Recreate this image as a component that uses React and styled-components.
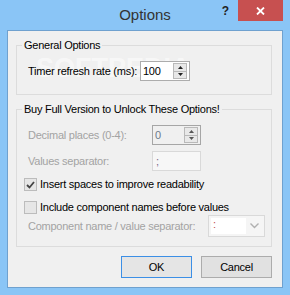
import React from 'react';
import styled, { createGlobalStyle } from 'styled-components';

const Global = createGlobalStyle`
  html, body { margin: 0; padding: 0; background: #8ac5f6; }
  body { font-family: "Liberation Sans", Arial, sans-serif; }
`;

const Window = styled.div`
  width: 290px;
  height: 295px;
  box-sizing: border-box;
  background: #8ac5f6;
  padding: 0 7px 7px 7px;
  display: flex;
  flex-direction: column;
  font-family: "Liberation Sans", Arial, sans-serif;
  font-size: 11px;
  letter-spacing: -0.25px;
  color: #000;
`;

const TitleBar = styled.div`
  height: 30px;
  flex: none;
  display: grid;
  grid-template-columns: 1fr auto 1fr;
  align-items: start;
`;

const Title = styled.div`
  grid-column: 2;
  font-size: 15px;
  line-height: 17px;
  padding-top: 6px;
  letter-spacing: 0;
  color: #333;
`;

const Controls = styled.div`
  grid-column: 3;
  display: flex;
  justify-content: flex-end;
  align-items: flex-start;
`;

const Help = styled.div`
  font-size: 12px;
  font-weight: bold;
  line-height: 14px;
  padding-top: 4px;
  margin-right: 9px;
  letter-spacing: 0;
  color: #222;
`;

const CloseButton = styled.div`
  width: 45px;
  height: 21px;
  background: #c75050;
  display: flex;
  align-items: center;
  justify-content: center;
`;

const Client = styled.div`
  flex: 1;
  position: relative;
  background: #f0f0f0;
  border: 1px solid #6fa1cf;
  padding: 7px 10px 9px 8px;
  display: flex;
  flex-direction: column;
`;

const Watermark = styled.div`
  position: absolute;
  left: 28px;
  top: 22px;
  font-size: 27px;
  font-weight: bold;
  letter-spacing: 0;
  color: rgba(255, 255, 255, 0.55);
  pointer-events: none;
`;

const Group = styled.fieldset`
  margin: 0 0 ${(p) => p.$mb}px 0;
  padding: 0;
  border: 1px solid #dcdcdc;
  min-width: 0;
  position: relative;
`;

const Legend = styled.legend`
  margin-left: 5px;
  padding: 0 2px;
  line-height: 14px;
  color: #000;
`;

const GroupBody = styled.div`
  display: flex;
  flex-direction: column;
  padding: 9px 0 ${(p) => p.$pb}px 7px;
`;

const Row = styled.div`
  display: flex;
  align-items: center;
  margin-top: ${(p) => p.$mt || 0}px;
  padding-left: ${(p) => (p.$check ? 0 : 4)}px;
`;

const Label = styled.span`
  width: ${(p) => p.$w}px;
  flex: none;
  white-space: nowrap;
  color: ${(p) => (p.$disabled ? '#a3a3a3' : '#000')};
`;

const SpinBox = styled.div`
  width: ${(p) => p.$w}px;
  height: 20px;
  box-sizing: border-box;
  border: 1px solid ${(p) => (p.$disabled ? '#a6a6a6' : '#acacac')};
  background: ${(p) => (p.$disabled ? '#f0f0f0' : '#fff')};
  display: flex;
  align-items: center;
`;

const FieldText = styled.span`
  flex: 1;
  padding-left: 2px;
  color: ${(p) => p.$color};
`;

const SpinButtons = styled.div`
  width: 14px;
  height: 16px;
  margin-right: 2px;
  display: flex;
  flex-direction: column;
  gap: 0;
`;

const SpinButton = styled.div`
  flex: 1;
  box-sizing: border-box;
  border: 1px solid #b9b9b9;
  background: #e8e8e8;
  display: flex;
  align-items: center;
  justify-content: center;
  & + & { border-top: none; }
`;

const TextBox = styled.div`
  width: 49px;
  height: 20px;
  box-sizing: border-box;
  border: 1px solid #d9d9d9;
  background: #f7f7f7;
  display: flex;
  align-items: center;
  padding-left: 3px;
  color: #7a6a8a;
`;

const CheckBox = styled.div`
  width: 13px;
  height: 13px;
  box-sizing: border-box;
  border: 1px solid #bcbcbc;
  background: #e6e6e6;
  flex: none;
  display: flex;
  align-items: center;
  justify-content: center;
`;

const CheckLabel = styled.span`
  margin-left: 3px;
  margin-top: -2px;
  white-space: nowrap;
`;

const Combo = styled.div`
  width: 57px;
  height: 22px;
  box-sizing: border-box;
  border: 1px solid #d9d9d9;
  background: #f5f5f5;
  display: flex;
  align-items: center;
  padding: 2px;
`;

const ComboField = styled.div`
  width: 33px;
  height: 16px;
  background: #fff;
  color: #c05050;
  padding-left: 2px;
  line-height: 13px;
`;

const ComboArrow = styled.div`
  flex: 1;
  display: flex;
  justify-content: center;
  align-items: center;
`;

const ButtonRow = styled.div`
  display: flex;
  justify-content: flex-end;
  gap: 9px;
`;

const Button = styled.div`
  width: 71px;
  height: 22px;
  box-sizing: border-box;
  border: 1px solid ${(p) => (p.$default ? '#3c8fe6' : '#acacac')};
  background: ${(p) => (p.$default ? '#e5e5e5' : '#e1e1e1')};
  display: flex;
  align-items: center;
  justify-content: center;
  color: #000;
`;

const Up = ({ color = '#222' }) => (
  <svg width="5" height="3" viewBox="0 0 5 3"><path d="M0 3 L2.5 0 L5 3 Z" fill={color} /></svg>
);
const Down = ({ color = '#222' }) => (
  <svg width="5" height="3" viewBox="0 0 5 3"><path d="M0 0 L2.5 3 L5 0 Z" fill={color} /></svg>
);

const Spin = ({ value, w, disabled }) => (
  <SpinBox $w={w} $disabled={disabled}>
    <FieldText $color={disabled ? '#6d7a8a' : '#000'}>{value}</FieldText>
    <SpinButtons>
      <SpinButton><Up color={disabled ? '#555' : '#222'} /></SpinButton>
      <SpinButton><Down color={disabled ? '#555' : '#222'} /></SpinButton>
    </SpinButtons>
  </SpinBox>
);

export default function App() {
  return (
    <>
      <Global />
      <Window>
        <TitleBar>
          <Title>Options</Title>
          <Controls>
            <Help>?</Help>
            <CloseButton>
              <svg width="9" height="8" viewBox="0 0 9 8">
                <path d="M1 0.5 L8 7.5 M8 0.5 L1 7.5" stroke="#fff" strokeWidth="1.8" />
              </svg>
            </CloseButton>
          </Controls>
        </TitleBar>
        <Client>
          <Watermark>SOFTPEDIA</Watermark>
          <Group $mb={7}>
            <Legend>General Options</Legend>
            <GroupBody $pb={13}>
              <Row>
                <Label $w={112}>Timer refresh rate (ms):</Label>
                <Spin value="100" w={50} />
              </Row>
            </GroupBody>
          </Group>
          <Group $mb={9}>
            <Legend>Buy Full Version to Unlock These Options!</Legend>
            <GroupBody $pb={9}>
              <Row>
                <Label $w={124} $disabled>Decimal places (0-4):</Label>
                <Spin value="0" w={49} disabled />
              </Row>
              <Row $mt={6}>
                <Label $w={124} $disabled>Values separator:</Label>
                <TextBox>;</TextBox>
              </Row>
              <Row $mt={7} $check>
                <CheckBox>
                  <svg width="9" height="8" viewBox="0 0 9 8">
                    <path d="M1 4 L3.5 6.5 L8 1" stroke="#444" strokeWidth="1.8" fill="none" />
                  </svg>
                </CheckBox>
                <CheckLabel>Insert spaces to improve readability</CheckLabel>
              </Row>
              <Row $mt={10} $check>
                <CheckBox />
                <CheckLabel>Include component names before values</CheckLabel>
              </Row>
              <Row $mt={1}>
                <Label $w={180} $disabled>Component name / value separator:</Label>
                <Combo>
                  <ComboField>:</ComboField>
                  <ComboArrow>
                    <svg width="9" height="6" viewBox="0 0 9 6">
                      <path d="M0.5 0.5 L4.5 4.5 L8.5 0.5" stroke="#b0b0b0" strokeWidth="1.4" fill="none" />
                    </svg>
                  </ComboArrow>
                </Combo>
              </Row>
            </GroupBody>
          </Group>
          <ButtonRow>
            <Button $default>OK</Button>
            <Button>Cancel</Button>
          </ButtonRow>
        </Client>
      </Window>
    </>
  );
}
